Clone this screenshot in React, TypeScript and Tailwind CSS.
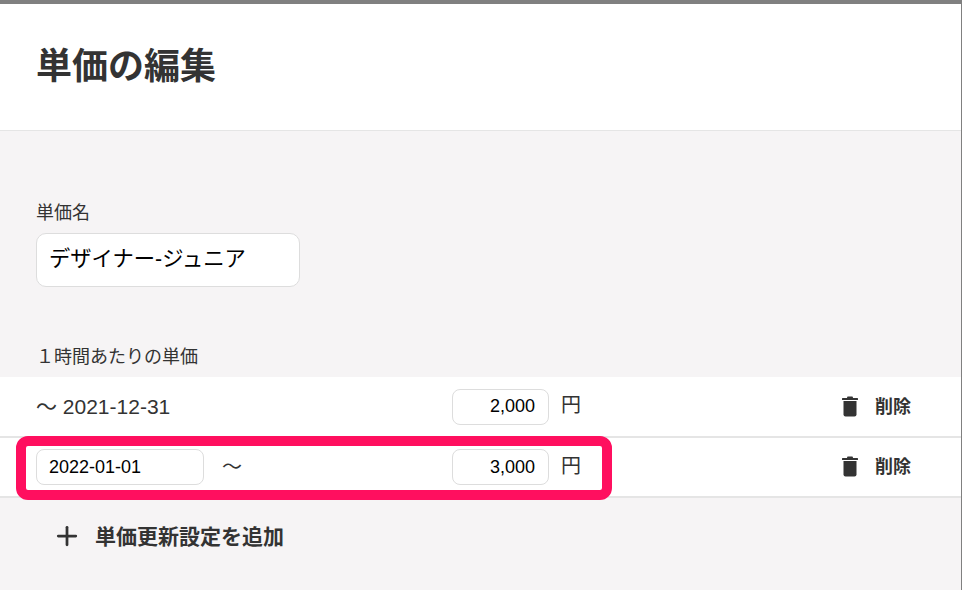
import { Plus } from "lucide-react";

const font = { fontFamily: '"Liberation Sans", "Noto Sans CJK JP", sans-serif' };

function TrashIcon() {
  return (
    <svg width="16" height="22" viewBox="0 0 16 22" className="text-[#333333]">
      <rect x="5" y="0.5" width="6" height="2" rx="1" fill="currentColor" />
      <rect x="0" y="2" width="16" height="2" rx="0.5" fill="currentColor" />
      <path d="M1.5 5h13v13.5a2 2 0 0 1-2 2h-9a2 2 0 0 1-2-2z" fill="currentColor" />
    </svg>
  );
}

function DeleteButton() {
  return (
    <div className="flex items-center gap-[17px]">
      <TrashIcon />
      <span className="text-[18px] font-bold text-[#333333] leading-none">削除</span>
    </div>
  );
}

function PriceField({ value }: { value: string }) {
  return (
    <div className="flex items-center">
      <div className="w-[97px] h-[36px] bg-white border border-[#dddddd] rounded-lg flex items-center justify-end pr-[13px] text-[18px] text-black">
        {value}
      </div>
      <span className="ml-[12px] pb-[3px] text-[20px] text-[#333333]">円</span>
    </div>
  );
}

export default function App() {
  return (
    <div style={font} className="relative w-[962px] h-[590px] overflow-hidden bg-[#f6f4f5] border-r border-[#808080]">
      <div className="h-[4px] bg-[#808080]" />
      <div className="h-[127px] bg-white border-b border-[#e5e5e5] flex items-center px-9">
        <h1 className="text-[36px] font-bold text-[#333333] leading-none">単価の編集</h1>
      </div>

      <div className="pt-[71px] px-9">
        <div className="text-[18px] leading-[22px] text-[#333333]">単価名</div>
        <div className="mt-[9px] w-[264px] h-[54px] bg-white border border-[#dddddd] rounded-[10px] flex items-center px-[12px] text-[21.3px] text-black">
          デザイナー-ジュニア
        </div>
        <div className="mt-[59px] text-[18px] leading-[22px] text-[#333333]">１時間あたりの単価</div>
      </div>

      <div className="mt-[9px]">
        <div className="h-[61px] bg-white border-b-2 border-[#e5e5e5] flex items-center pl-9 pr-[50px]">
          <div className="w-[416px] text-[21px] text-[#333333]">〜 2021-12-31</div>
          <PriceField value="2,000" />
          <div className="ml-auto"><DeleteButton /></div>
        </div>
        <div className="h-[60px] bg-white border-b-2 border-[#e5e5e5] flex items-center pl-9 pr-[50px]">
          <div className="w-[168px] h-[36px] bg-white border border-[#dddddd] rounded-lg flex items-center px-[12px] text-[18px] text-black">
            2022-01-01
          </div>
          <div className="w-[248px] pl-[18px] text-[20px] text-[#333333]">〜</div>
          <PriceField value="3,000" />
          <div className="ml-auto"><DeleteButton /></div>
        </div>
      </div>

      <div className="flex items-center pl-[52px] mt-[23px]">
        <Plus size={30} strokeWidth={2.2} className="text-[#333333]" />
        <span className="ml-[13px] text-[21px] font-bold text-[#333333] leading-none">単価更新設定を追加</span>
      </div>

      <div className="absolute left-[16px] top-[436px] w-[596px] h-[64px] border-[10px] border-[#ff0f5f] rounded-[12px]" />
    </div>
  );
}
